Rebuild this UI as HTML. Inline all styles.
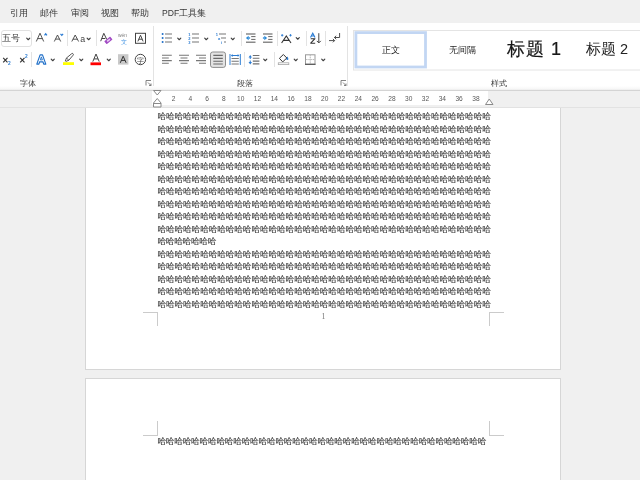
<!DOCTYPE html>
<html><head><meta charset="utf-8">
<style>
*{margin:0;padding:0;box-sizing:border-box}
html,body{width:640px;height:480px;overflow:hidden}
body{position:relative;background:#f0f0f0;font-family:"Liberation Sans",sans-serif;color:#262626}
.a{position:absolute}
#menu{left:0;top:0;width:640px;height:23px;background:#f0f0f0}
.mi{position:absolute;top:7px;font-size:9.3px;line-height:12px;color:#363636}
#ribbon{left:0;top:23px;width:640px;height:68px;background:linear-gradient(#fff 0,#fff 63px,#f7f7f7 66px,#eaeaea 67px);border-bottom:1px solid #d4d4d4}
.sep{position:absolute;width:1px;background:#e3e3e3}
.lbl{position:absolute;top:77.5px;font-size:8px;line-height:11px;color:#3a3a3a}
.ic{position:absolute;overflow:visible}
#ruler{left:0;top:90px;width:640px;height:17px;background:#efefef}
#rwhite{left:152px;top:91px;width:336px;height:14px;background:#fff}
.rn{position:absolute;top:94.5px;font-size:6.6px;line-height:8px;color:#585858;width:20px;text-align:center}
.page{position:absolute;background:#fff;border:1px solid #d6d6d6}
.txt{position:absolute;left:157.4px;font-size:8.7px;line-height:12px;color:#383838;white-space:nowrap;text-rendering:geometricPrecision;-webkit-text-stroke:0.12px #383838}
.hl{position:absolute;height:1px;background:#cbcbcb}
.vl{position:absolute;width:1px;background:#cbcbcb}
.chev{position:absolute}
</style></head><body>
<div id="root" style="position:absolute;left:0;top:0;width:640px;height:480px;will-change:transform;overflow:hidden">
<div id="menu" class="a">
<span class="mi" style="left:10px">引用</span>
<span class="mi" style="left:40px">邮件</span>
<span class="mi" style="left:71px">审阅</span>
<span class="mi" style="left:101px">视图</span>
<span class="mi" style="left:131px">帮助</span>
<span class="mi" style="left:162px"><span style="font-size:8.6px">PDF</span>工具集</span>
</div>
<div id="ribbon" class="a"></div>

<!-- separators -->
<div class="sep" style="left:153px;top:26px;height:60px"></div>
<div class="sep" style="left:347px;top:26px;height:60px"></div>
<div class="sep" style="left:67px;top:30px;height:16px"></div>
<div class="sep" style="left:96px;top:30px;height:16px"></div>
<div class="sep" style="left:31px;top:52px;height:15px"></div>
<div class="sep" style="left:241px;top:31px;height:15px"></div>
<div class="sep" style="left:277px;top:31px;height:15px"></div>
<div class="sep" style="left:306px;top:31px;height:15px"></div>
<div class="sep" style="left:325px;top:31px;height:15px"></div>
<div class="sep" style="left:244px;top:52px;height:15px"></div>
<div class="sep" style="left:274px;top:52px;height:15px"></div>

<!-- labels -->
<div class="lbl" style="left:20px">字体</div>
<div class="lbl" style="left:237px">段落</div>
<div class="lbl" style="left:491px">样式</div>

<!-- font size combo -->
<div class="a" style="left:1px;top:30px;width:31px;height:17px;border:1px solid #e1e1e1;border-radius:3px;background:#fff"></div>
<div class="a" style="left:2.3px;top:32px;font-size:9px;line-height:12px;color:#333">五号</div>

<!-- ICONS SVG overlay -->
<svg class="ic" style="left:0;top:0" width="640" height="90" viewBox="0 0 640 90">
<g fill="none" stroke="#404040" stroke-width="1.15" stroke-linecap="round" stroke-linejoin="round">
 <!-- chevrons -->
 <path d="M26.70 38.20l1.55 1.55 1.55-1.55"/>
 <path d="M87.10 38.20l1.55 1.55 1.55-1.55"/>
 <path d="M51.20 59.20l1.55 1.55 1.55-1.55"/>
 <path d="M79.70 59.20l1.55 1.55 1.55-1.55"/>
 <path d="M107.20 59.20l1.55 1.55 1.55-1.55"/>
 <path d="M177.70 38.20l1.55 1.55 1.55-1.55"/>
 <path d="M204.70 38.20l1.55 1.55 1.55-1.55"/>
 <path d="M231.20 38.20l1.55 1.55 1.55-1.55"/>
 <path d="M296.20 37.70l1.55 1.55 1.55-1.55"/>
 <path d="M263.70 59.20l1.55 1.55 1.55-1.55"/>
 <path d="M294.20 59.20l1.55 1.55 1.55-1.55"/>
 <path d="M321.70 59.20l1.55 1.55 1.55-1.55"/>
</g>
<!-- grow font -->
<g fill="none" stroke="#4a4a4a" stroke-width="0.95">
 <path d="M36.3 41.5L40 33.2l3.7 8.3M37.6 38.6h4.8"/>
 <path d="M54.3 41.5L57.5 35l3.2 6.5M55.4 39.1h4.2"/>
 <!-- Aa -->
 <path d="M71.8 41.5L75.2 35l3.4 6.5M72.9 39.2h4.6"/>
</g>
<g fill="none" stroke="#2b7cd3" stroke-width="1.25">
 <path d="M44.5 35.3l1.2-1.5 1.2 1.5"/>
 <path d="M60.5 33.8l1.3 1.5 1.3-1.5"/>
</g>
<text x="80.2" y="41.7" font-family="Liberation Sans" font-size="8.8" fill="#444">a</text>
<!-- clear formatting -->
<path d="M100.7 41.2L103.8 33.3l3 6.2M101.8 38.5h3.5" fill="none" stroke="#444" stroke-width="1"/>
<g transform="translate(108.4 40.4) rotate(-38)"><rect x="-3.8" y="-1.9" width="7.6" height="3.8" rx="0.5" fill="#a24bc4"/><rect x="-1.6" y="-0.8" width="3.6" height="1.6" fill="#e9d2f2"/></g>
<!-- pinyin -->
<text x="117.9" y="37.1" font-family="Liberation Sans" font-size="4.9" fill="#808080">wén</text>
<text x="120.9" y="43.7" font-size="5.6" fill="#4a98e4" style="font-family:'Liberation Sans'">文</text>
<!-- char border -->
<rect x="135.5" y="33.3" width="10" height="10" fill="none" stroke="#444" stroke-width="1"/>
<path d="M137.9 41.4L140.5 35.2l2.6 6.2M138.8 39.2h3.4" fill="none" stroke="#444" stroke-width="1"/>

<!-- row 2: sub/superscript -->
<g fill="none" stroke="#333" stroke-width="1.15">
 <path d="M3.2 57.8l4.3 4.6M7.5 57.8l-4.3 4.6"/>
 <path d="M20.2 57.8l4.3 4.6M24.5 57.8l-4.3 4.6"/>
</g>
<text x="7.9" y="65.2" font-family="Liberation Sans" font-size="4.8" font-weight="bold" fill="#2b7cd3">2</text>
<text x="24.9" y="58.2" font-family="Liberation Sans" font-size="4.8" font-weight="bold" fill="#2b7cd3">2</text>
<!-- text effects A outline -->
<path d="M36.8 64.1L40.1 54.9h2.4l3.3 9.2h-2.1l-0.75-2.3h-3.3l-0.75 2.3z" fill="none" stroke="#1f6fc8" stroke-width="1.15" stroke-linejoin="round"/>
<path d="M40.3 59.9h2.1l-1.05-3z" fill="none" stroke="#1f6fc8" stroke-width="0.9" stroke-linejoin="round"/>
<!-- highlighter -->
<path d="M65.2 61.2l1.3-3.2 5-4.2a1 1 0 0 1 1.6 1.4l-4.2 5-3.2 1.3" fill="none" stroke="#444" stroke-width="0.9"/>
<path d="M66.5 58l2.3 2.2" fill="none" stroke="#444" stroke-width="0.9"/>
<rect x="63" y="62.2" width="11" height="2.8" fill="#ffff00"/>
<!-- font color -->
<path d="M92.8 61.6L96 54l3.2 7.6M94 58.9h4" fill="none" stroke="#444" stroke-width="1"/>
<rect x="90.5" y="62.4" width="10.5" height="2.8" fill="#ff0000"/>
<!-- shaded A -->
<rect x="118" y="54.2" width="10.4" height="10.4" fill="#c9c9c9"/>
<path d="M120.3 62.8L123.2 56.2l2.9 6.6M121.3 60.4h3.8" fill="none" stroke="#333" stroke-width="1"/>
<!-- enclosed char -->
<circle cx="140.4" cy="59.5" r="5.2" fill="none" stroke="#444" stroke-width="1"/>
<text x="137.1" y="62.6" font-size="6.6" fill="#444" style="font-family:'Liberation Sans'">字</text>
<!-- launchers -->
<g fill="none" stroke="#666" stroke-width="0.8">
 <path d="M146 85.5v-5h5M148 82.5l3 3M151 83.5v2h-2"/>
 <path d="M341 85.5v-5h5M343 82.5l3 3M346 83.5v2h-2"/>
</g>

<!-- bullets -->
<g fill="#1f6fc8">
 <circle cx="162.6" cy="34" r="1"/><circle cx="162.6" cy="38" r="1"/><circle cx="162.6" cy="42" r="1"/>
</g>
<g stroke="#777" stroke-width="1.1">
 <path d="M165 34h7M165 38h7M165 42h7"/>
 <path d="M192 34h7M192 38h7M192 42h7"/>
 <path d="M219 34h7M221 38h5M224 42h2"/>
</g>
<g font-family="Liberation Sans" font-size="4" font-weight="bold" fill="#2b7cd3">
 <text x="188.3" y="35.6">1</text><text x="188.3" y="39.6">2</text><text x="188.3" y="43.6">3</text>
 <text x="215.8" y="35.6">1</text><text x="218" y="39.6">a</text><text x="221" y="43.8">i</text>
</g>
<!-- indent -->
<g stroke="#8a8a8a" stroke-width="1.45">
 <path d="M246 34h9.5M246 42.2h9.5M263 34h9.5M263 42.2h9.5"/>
</g>
<g stroke="#555" stroke-width="0.9">
 <path d="M251.2 36.6h4.3M251.2 39.4h4.3M268.2 36.6h4.3M268.2 39.4h4.3"/>
</g>
<g fill="#2b8ad8">
 <path d="M245.9 38l2.8-2.3v4.6z"/><rect x="248.6" y="37.3" width="1.5" height="1.4"/>
 <path d="M267.1 38l-2.8-2.3v4.6z"/><rect x="262.9" y="37.3" width="1.5" height="1.4"/>
</g>
<!-- asian layout A -->
<path d="M281.6 43l4.7-7 4.7 7M283.5 40.4h5.6" fill="none" stroke="#333" stroke-width="1.1"/>
<g stroke="#2b7cd3" stroke-width="0.9">
 <path d="M281 35.3h2.4M282.2 34.1v2.4M289.3 35.3h2.4M290.5 34.1v2.4"/>
</g>
<!-- sort -->
<path d="M310.5 37.4L312.75 33.2L315 37.4M311.3 36h2.9" fill="none" stroke="#2b7cd3" stroke-width="1.15"/>
<path d="M310.7 38.7h4.3l-4.3 4.5h4.5" fill="none" stroke="#333" stroke-width="1.1" stroke-linejoin="round"/>
<path d="M318.8 33.2v9.6M316.8 40.9l2 2 2-2" fill="none" stroke="#444" stroke-width="1"/>
<!-- show/hide arrows -->
<g fill="none" stroke="#444" stroke-width="0.95">
 <path d="M329 40.6h5.6M332.9 38.9l1.7 1.7-1.7 1.7"/>
 <path d="M339.6 33v4.5h-5.2M336.2 35.8l-1.8 1.7 1.8 1.7"/>
</g>

<!-- align -->
<g stroke="#777" stroke-width="1.1">
 <path d="M162 55.3h9.8M162 58h6.8M162 60.6h9.8M162 63.3h6.8"/>
 <path d="M179 55.3h10M180.5 58h7M179 60.6h10M180.5 63.3h7"/>
 <path d="M196 55.3h10M199 58h7M196 60.6h10M199 63.3h7"/>
</g>
<rect x="210.5" y="52" width="15" height="15.4" rx="2.2" fill="#e3e3e3" stroke="#8d8d8d" stroke-width="1"/>
<g stroke="#6a6a6a" stroke-width="1.1">
 <path d="M213.3 55.4h9.5M213.3 58.4h9.5M213.3 61.2h9.5M213.3 64h9.5"/>
</g>
<!-- distributed -->
<g stroke="#2b7cd3" stroke-width="1">
 <path d="M230 54v11M240.3 54v11M231.5 55.5h7.3"/>
</g>
<g fill="#2b7cd3"><path d="M231 55.5l1.6-1.4v2.8z"/><path d="M239.3 55.5l-1.6-1.4v2.8z"/></g>
<g stroke="#777" stroke-width="1.1">
 <path d="M231.5 58.5h7.3M231.5 61.2h7.3M231.5 64h7.3"/>
</g>
<!-- line spacing -->
<g stroke="#707070" stroke-width="1.1">
 <path d="M252.8 55.5h6.6M252.8 58.3h6.6M252.8 61.1h6.6M252.8 63.9h6.6"/>
</g>
<g fill="#2b7cd3">
 <path d="M248.5 57.6l1.75-2.6 1.75 2.6z"/><rect x="249.75" y="57" width="1" height="2"/>
 <path d="M248.5 61.9l1.75 2.6 1.75-2.6z"/><rect x="249.75" y="60.5" width="1" height="2"/>
</g>
<!-- shading bucket -->
<path d="M287.3 56.6c.8 1.1 1.1 1.8 1.1 2.3a1.1 1.1 0 0 1-2.2 0c0-.5.3-1.2 1.1-2.3z" fill="#2b7cd3"/>
<path d="M279.4 58.3L283.4 54.5L286.8 58L282.7 61.9Z" fill="none" stroke="#333" stroke-width="1" stroke-linejoin="round"/>
<rect x="278.3" y="62.8" width="10.5" height="1.8" fill="#fff" stroke="#a8a8a8" stroke-width="0.8"/>
<!-- borders -->
<g fill="none" stroke="#9a9a9a" stroke-width="1">
 <rect x="305.5" y="54.8" width="9.5" height="9.5"/>
</g>
<path d="M310.25 55v9M305.7 59.55h9.2" fill="none" stroke="#b0b0b0" stroke-width="0.9" stroke-dasharray="1.2 0.6"/>
<path d="M305 64.3h10.5" stroke="#555" stroke-width="1.2"/>
</svg>



<!-- styles gallery -->
<svg class="ic" style="left:0;top:0" width="640" height="90">
 <rect x="353.5" y="30.5" width="300" height="39.5" fill="#fff" stroke="#e4e4e4" stroke-width="1"/>
 <rect x="355.9" y="32.6" width="69.6" height="34.4" fill="#fff" stroke="#c2d6f3" stroke-width="2.8"/>
</svg>
<div class="a" style="left:381.6px;top:43.9px;font-size:9px;line-height:12px;color:#262626">正文</div>
<div class="a" style="left:448.5px;top:43.9px;font-size:9.2px;line-height:12px;color:#262626">无间隔</div>
<div class="a" style="left:507.3px;top:37.6px;font-size:18px;line-height:22px;letter-spacing:0.9px;-webkit-text-stroke:0.2px #181818;color:#181818">标题 1</div>
<div class="a" style="left:586px;top:41.3px;font-size:14.5px;line-height:17px;color:#222">标题 2</div>

<!-- pages -->
<div class="page" style="left:85px;top:100px;width:476px;height:270px"></div>
<div class="page" style="left:85px;top:378px;width:476px;height:200px"></div>
<div id="ruler2" class="a" style="left:0;top:91px;width:640px;height:17px;background:#f0f0f0;border-bottom:1px solid #e2e2e2"></div>
<div class="a" style="left:152px;top:91px;width:336px;height:14px;background:#fff"></div>
<div class="rn" style="left:163.5px">2</div>
<div class="rn" style="left:180.3px">4</div>
<div class="rn" style="left:197.1px">6</div>
<div class="rn" style="left:213.9px">8</div>
<div class="rn" style="left:230.7px">10</div>
<div class="rn" style="left:247.5px">12</div>
<div class="rn" style="left:264.3px">14</div>
<div class="rn" style="left:281.1px">16</div>
<div class="rn" style="left:297.9px">18</div>
<div class="rn" style="left:314.7px">20</div>
<div class="rn" style="left:331.5px">22</div>
<div class="rn" style="left:348.3px">24</div>
<div class="rn" style="left:365.1px">26</div>
<div class="rn" style="left:381.9px">28</div>
<div class="rn" style="left:398.7px">30</div>
<div class="rn" style="left:415.5px">32</div>
<div class="rn" style="left:432.3px">34</div>
<div class="rn" style="left:449.1px">36</div>
<div class="rn" style="left:465.9px">38</div>
<svg class="ic" style="left:0;top:0" width="640" height="110">
 <g fill="#fff" stroke="#8a8a8a" stroke-width="1">
  <path d="M153.5 90.5h7.5l-3.75 4.5z"/>
  <path d="M157.25 98.5l3.75 4.5v4h-7.5v-4z"/>
  <path d="M153.5 103.5h7.5"/>
  <path d="M485.5 104.5l3.75-5.5 3.75 5.5z"/>
 </g>
</svg>

<div class="txt" style="top:110.25px;letter-spacing:-0.14px">哈哈哈哈哈哈哈哈哈哈哈哈哈哈哈哈哈哈哈哈哈哈哈哈哈哈哈哈哈哈哈哈哈哈哈哈哈哈哈</div>
<div class="txt" style="top:122.76px;letter-spacing:-0.14px">哈哈哈哈哈哈哈哈哈哈哈哈哈哈哈哈哈哈哈哈哈哈哈哈哈哈哈哈哈哈哈哈哈哈哈哈哈哈哈</div>
<div class="txt" style="top:135.27px;letter-spacing:-0.14px">哈哈哈哈哈哈哈哈哈哈哈哈哈哈哈哈哈哈哈哈哈哈哈哈哈哈哈哈哈哈哈哈哈哈哈哈哈哈哈</div>
<div class="txt" style="top:147.78px;letter-spacing:-0.14px">哈哈哈哈哈哈哈哈哈哈哈哈哈哈哈哈哈哈哈哈哈哈哈哈哈哈哈哈哈哈哈哈哈哈哈哈哈哈哈</div>
<div class="txt" style="top:160.29px;letter-spacing:-0.14px">哈哈哈哈哈哈哈哈哈哈哈哈哈哈哈哈哈哈哈哈哈哈哈哈哈哈哈哈哈哈哈哈哈哈哈哈哈哈哈</div>
<div class="txt" style="top:172.80px;letter-spacing:-0.14px">哈哈哈哈哈哈哈哈哈哈哈哈哈哈哈哈哈哈哈哈哈哈哈哈哈哈哈哈哈哈哈哈哈哈哈哈哈哈哈</div>
<div class="txt" style="top:185.31px;letter-spacing:-0.14px">哈哈哈哈哈哈哈哈哈哈哈哈哈哈哈哈哈哈哈哈哈哈哈哈哈哈哈哈哈哈哈哈哈哈哈哈哈哈哈</div>
<div class="txt" style="top:197.82px;letter-spacing:-0.14px">哈哈哈哈哈哈哈哈哈哈哈哈哈哈哈哈哈哈哈哈哈哈哈哈哈哈哈哈哈哈哈哈哈哈哈哈哈哈哈</div>
<div class="txt" style="top:210.33px;letter-spacing:-0.14px">哈哈哈哈哈哈哈哈哈哈哈哈哈哈哈哈哈哈哈哈哈哈哈哈哈哈哈哈哈哈哈哈哈哈哈哈哈哈哈</div>
<div class="txt" style="top:222.84px;letter-spacing:-0.14px">哈哈哈哈哈哈哈哈哈哈哈哈哈哈哈哈哈哈哈哈哈哈哈哈哈哈哈哈哈哈哈哈哈哈哈哈哈哈哈</div>
<div class="txt" style="top:235.35px;letter-spacing:-0.3px">哈哈哈哈哈哈哈</div>
<div class="txt" style="top:247.86px;letter-spacing:-0.14px">哈哈哈哈哈哈哈哈哈哈哈哈哈哈哈哈哈哈哈哈哈哈哈哈哈哈哈哈哈哈哈哈哈哈哈哈哈哈哈</div>
<div class="txt" style="top:260.37px;letter-spacing:-0.14px">哈哈哈哈哈哈哈哈哈哈哈哈哈哈哈哈哈哈哈哈哈哈哈哈哈哈哈哈哈哈哈哈哈哈哈哈哈哈哈</div>
<div class="txt" style="top:272.88px;letter-spacing:-0.14px">哈哈哈哈哈哈哈哈哈哈哈哈哈哈哈哈哈哈哈哈哈哈哈哈哈哈哈哈哈哈哈哈哈哈哈哈哈哈哈</div>
<div class="txt" style="top:285.39px;letter-spacing:-0.14px">哈哈哈哈哈哈哈哈哈哈哈哈哈哈哈哈哈哈哈哈哈哈哈哈哈哈哈哈哈哈哈哈哈哈哈哈哈哈哈</div>
<div class="txt" style="top:297.90px;letter-spacing:-0.14px">哈哈哈哈哈哈哈哈哈哈哈哈哈哈哈哈哈哈哈哈哈哈哈哈哈哈哈哈哈哈哈哈哈哈哈哈哈哈哈</div>
<div class="txt" style="top:434.50px;letter-spacing:-0.26px">哈哈哈哈哈哈哈哈哈哈哈哈哈哈哈哈哈哈哈哈哈哈哈哈哈哈哈哈哈哈哈哈哈哈哈哈哈哈哈</div>

<div class="a" style="left:321.4px;top:312px;font-family:'Liberation Serif',serif;font-size:8px;line-height:9px;color:#777">1</div>
<!-- corner marks -->
<div class="hl" style="left:143px;top:312px;width:15px"></div>
<div class="vl" style="left:157px;top:312px;height:14px"></div>
<div class="hl" style="left:489px;top:312px;width:15px"></div>
<div class="vl" style="left:489px;top:312px;height:14px"></div>
<div class="vl" style="left:157px;top:421px;height:15px"></div>
<div class="hl" style="left:143px;top:435px;width:15px"></div>
<div class="vl" style="left:489px;top:421px;height:15px"></div>
<div class="hl" style="left:489px;top:435px;width:15px"></div>
</div>
</body></html>
